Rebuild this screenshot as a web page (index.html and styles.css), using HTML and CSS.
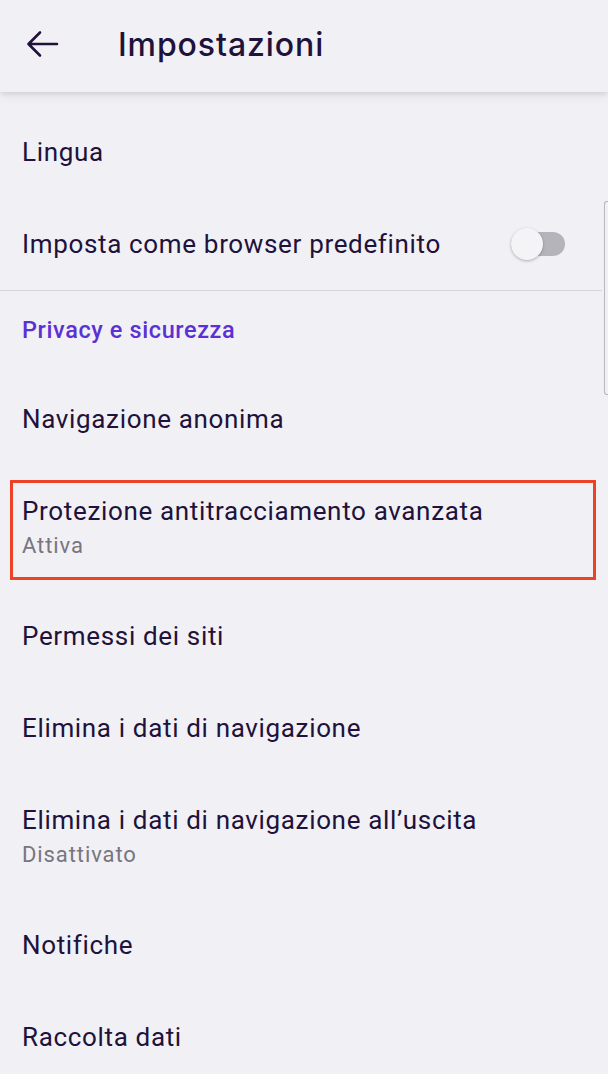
FILE: index.html
```html
<!DOCTYPE html>
<html lang="it">
<head>
<meta charset="utf-8">
<title>Impostazioni</title>
<link rel="stylesheet" href="styles.css">
</head>
<body>
<div class="screen">
  <header class="appbar">
    <svg class="back" width="34" height="30" viewBox="0 0 34 30" aria-hidden="true">
      <path d="M32 15 H4 M15 3.5 L3.5 15 L15 26.5" fill="none" stroke="#20123a" stroke-width="2.6" stroke-linecap="round" stroke-linejoin="round"/>
    </svg>
    <h1 class="title">Impostazioni</h1>
  </header>
  <main class="list">
    <div class="row"><span class="label">Lingua</span></div>
    <div class="row row-switch">
      <span class="label">Imposta come browser predefinito</span>
      <span class="switch"><span class="knob"></span></span>
    </div>
    <div class="divider"></div>
    <div class="category">Privacy e sicurezza</div>
    <div class="row"><span class="label">Navigazione anonima</span></div>
    <div class="row row-two highlighted">
      <span class="label">Protezione antitracciamento avanzata</span>
      <span class="summary">Attiva</span>
    </div>
    <div class="row"><span class="label">Permessi dei siti</span></div>
    <div class="row"><span class="label">Elimina i dati di navigazione</span></div>
    <div class="row row-two">
      <span class="label">Elimina i dati di navigazione all’uscita</span>
      <span class="summary">Disattivato</span>
    </div>
    <div class="row"><span class="label">Notifiche</span></div>
    <div class="row"><span class="label">Raccolta dati</span></div>
  </main>
  <div class="scrollthumb"></div>
</div>
</body>
</html>
```
FILE: styles.css
```css
* { box-sizing: border-box; }
html, body { margin: 0; padding: 0; }
body {
  background: #f1f0f5;
  font-family: Roboto, "Noto Sans", sans-serif;
  color: #20123a;
  width: 608px;
  height: 1074px;
  overflow: hidden;
}
.screen { position: relative; width: 608px; height: 1074px; }
.appbar {
  height: 92px;
  display: flex;
  align-items: center;
  padding-left: 25px;
  padding-bottom: 4px;
  background: #f1f0f5;
  box-shadow: 0 2px 5px rgba(0,0,0,0.10), 0 6px 10px rgba(0,0,0,0.04);
  position: relative;
  z-index: 1;
}
.back { display: block; }
.title {
  margin: 0 0 0 59px;
  font-family: Inter, "Noto Sans", sans-serif;
  font-weight: 500;
  font-size: 32px;
  letter-spacing: 0.9px;
  color: #20123a;
}
.list { padding-top: 14px; }
.row {
  height: 92px;
  display: flex;
  flex-direction: column;
  justify-content: center;
  padding: 0 22px;
}
.label { font-size: 26px; line-height: 30px; letter-spacing: 0.66px; color: #20123a; white-space: nowrap; }
.row-switch { flex-direction: row; align-items: center; justify-content: space-between; }
.row-two { height: 125px; }
.row-two .summary { font-size: 22px; line-height: 26px; letter-spacing: 0.9px; color: #77757f; margin-top: 7px; }
.highlighted { position: relative; }
.highlighted::after {
  content: "";
  position: absolute;
  left: 10px; right: 12px; top: 15px; bottom: 10px;
  border: 3px solid #ec4327;
}
.switch {
  position: relative;
  width: 54px;
  height: 24px;
  margin-right: 21px;
  border-radius: 12px;
  background: #b5b4ba;
}
.knob {
  position: absolute;
  left: 0; top: -4px;
  width: 32px; height: 32px;
  border-radius: 50%;
  background: #f4f4f6;
  box-shadow: 0 1px 3px rgba(0,0,0,0.28);
}
.divider { height: 1px; background: #d7d6dc; margin-right: 6px; }
.category {
  height: 82px;
  display: flex;
  align-items: center;
  padding: 0 22px 4px;
  font-size: 23.5px;
  letter-spacing: 0.6px;
  font-weight: 500;
  color: #5b31d4;
}
.scrollthumb {
  position: absolute;
  right: 0; top: 201px;
  width: 4px; height: 194px;
  border-left: 1.5px solid #b8b7bd;
  border-bottom: 1.5px solid #b8b7bd;
  border-top: 1.5px solid #b8b7bd;
  border-radius: 3px 0 0 3px;
}
```
